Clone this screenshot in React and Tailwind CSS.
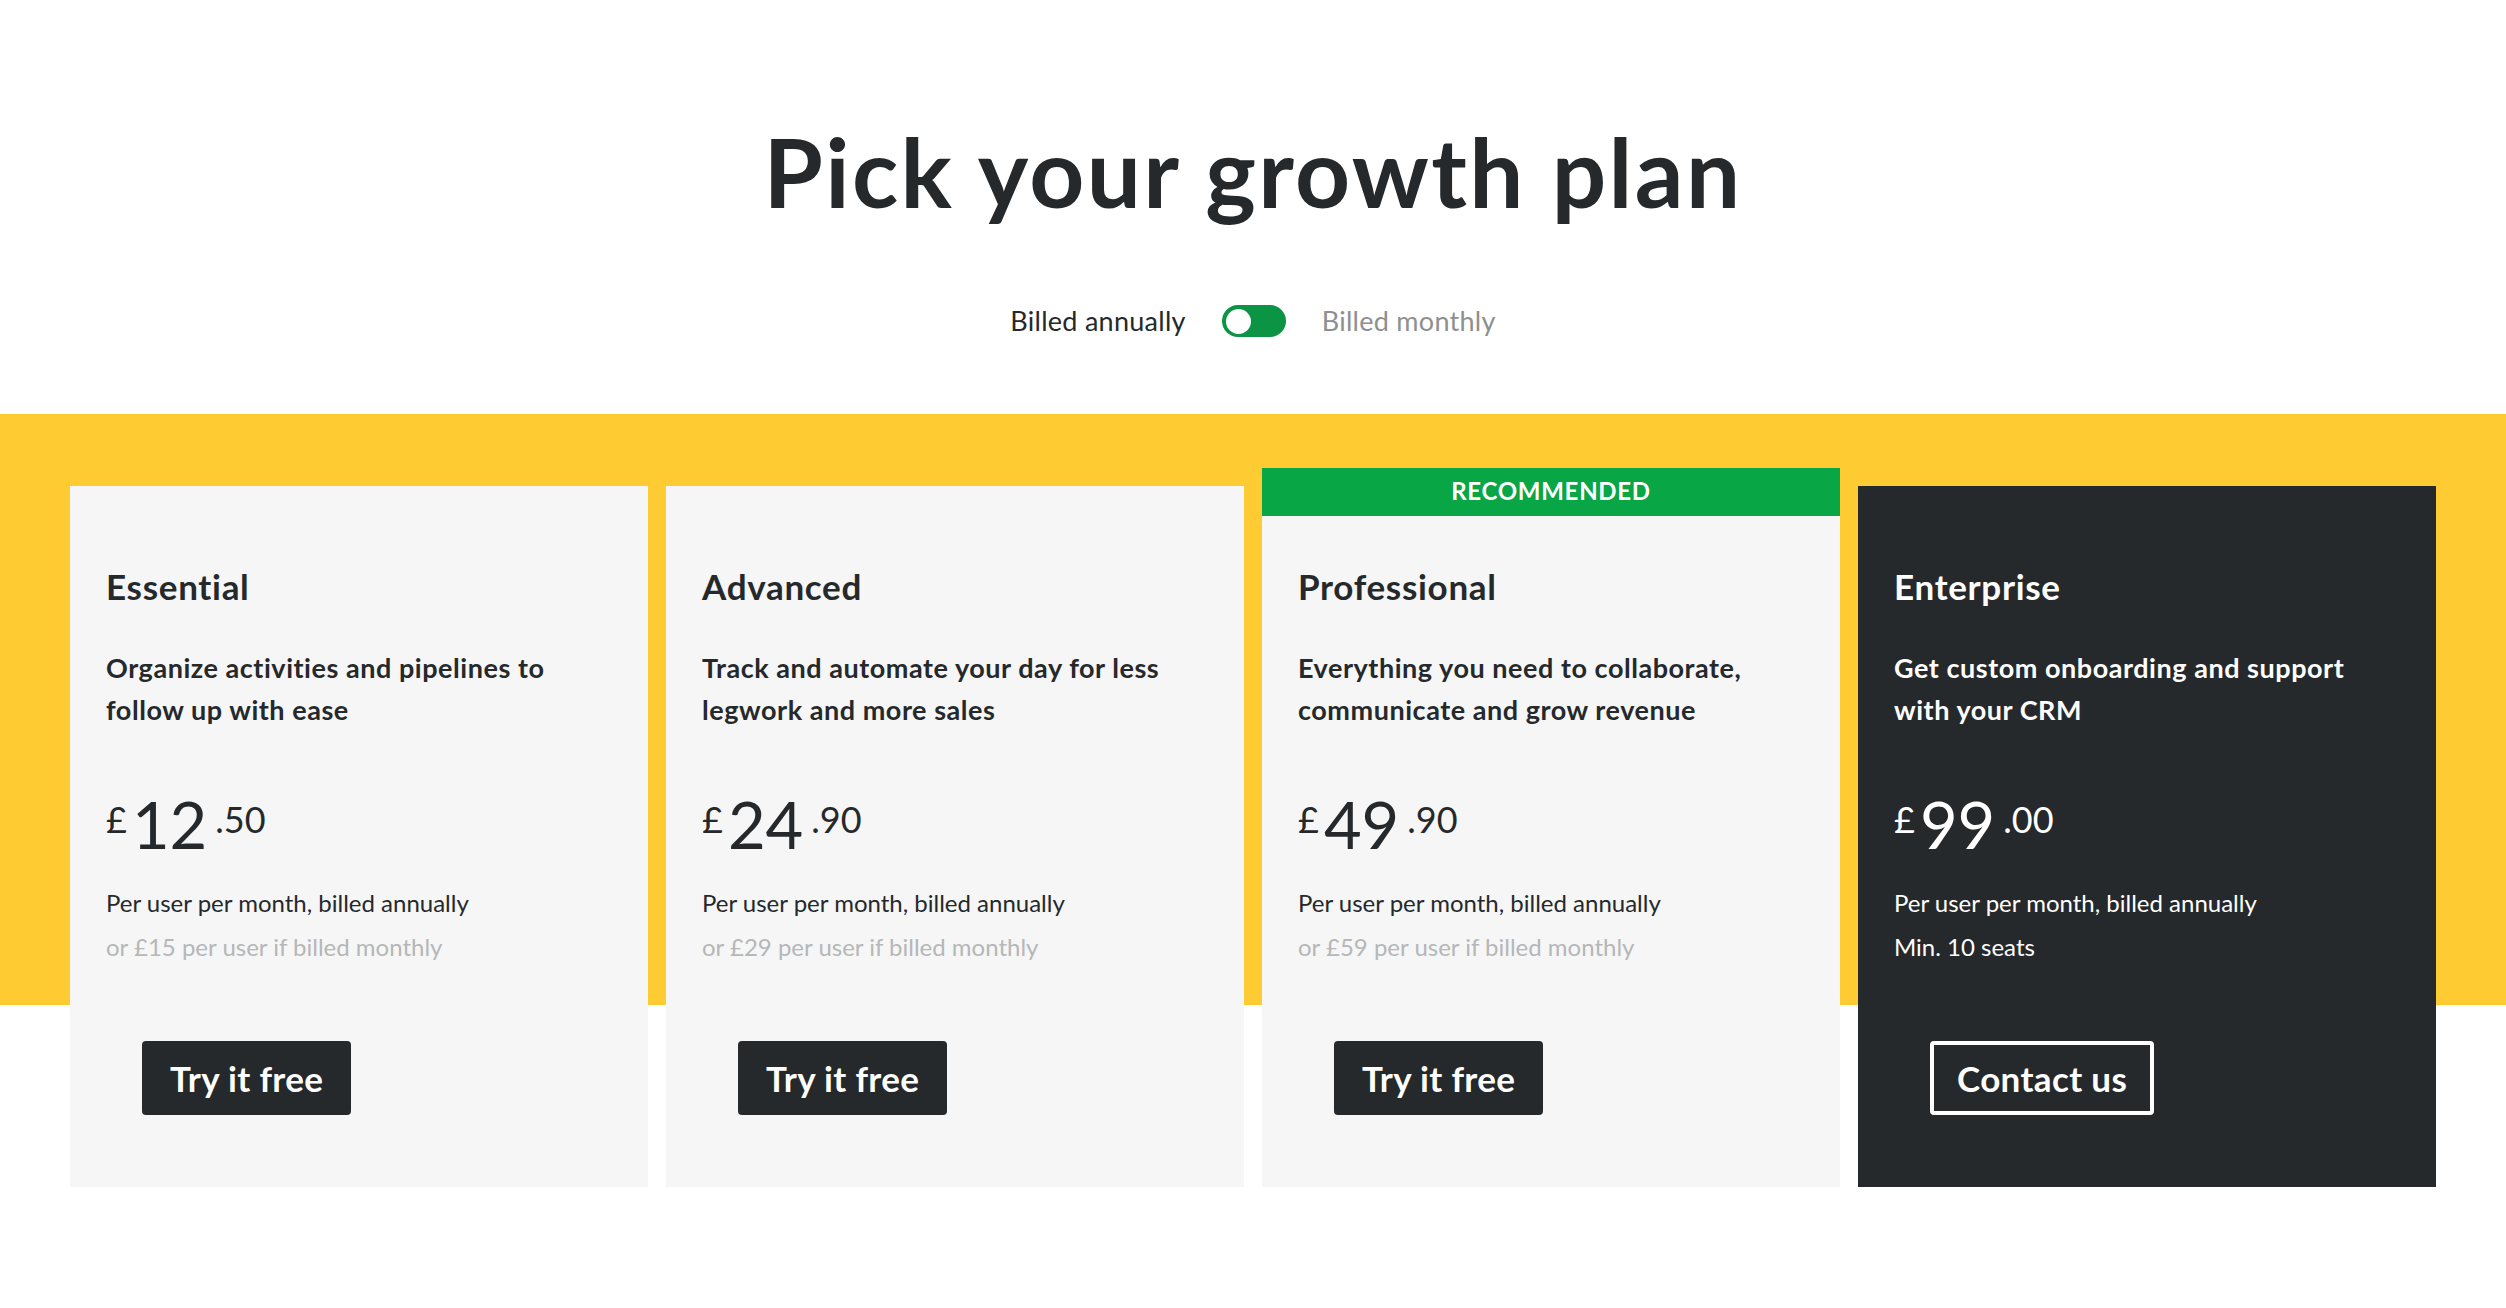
const plans = [
  {
    name: 'Essential',
    lines: ['Organize activities and pipelines to', 'follow up with ease'],
    whole: '12',
    cents: '.50',
    note: 'or £15 per user if billed monthly',
    cta: 'Try it free',
  },
  {
    name: 'Advanced',
    lines: ['Track and automate your day for less', 'legwork and more sales'],
    whole: '24',
    cents: '.90',
    note: 'or £29 per user if billed monthly',
    cta: 'Try it free',
  },
  {
    name: 'Professional',
    lines: ['Everything you need to collaborate,', 'communicate and grow revenue'],
    whole: '49',
    cents: '.90',
    note: 'or £59 per user if billed monthly',
    cta: 'Try it free',
    recommended: true,
  },
  {
    name: 'Enterprise',
    lines: ['Get custom onboarding and support', 'with your CRM'],
    whole: '99',
    cents: '.00',
    note: 'Min. 10 seats',
    cta: 'Contact us',
    dark: true,
  },
];

const PlanCard = ({ plan }) => {
  const dark = plan.dark;
  return (
    <div
      className={`relative flex flex-col pt-[79px] px-9 pb-[72px] ${
        dark ? 'bg-[#26292c] text-white' : 'bg-[#f6f6f6] text-[#25292c]'
      }`}
    >
      {plan.recommended && (
        <div className="absolute -top-[18px] left-0 right-0 h-12 bg-[#08a645] flex items-center justify-center pb-[3px] text-white text-[24px] font-bold tracking-[0.03em]">
          RECOMMENDED
        </div>
      )}

      <h2 className="text-[35px] leading-[42px] font-bold tracking-[0.02em]">{plan.name}</h2>

      <p className="mt-[40px] text-[27px] leading-[42px] font-bold tracking-[0.02em] whitespace-nowrap">
        {plan.lines[0]}
        <br />
        {plan.lines[1]}
      </p>

      {/* Price */}
      <div className="mt-[61px] flex items-start">
        <span className="mt-[9px] text-[36px] leading-none font-normal">£</span>
        <span className="ml-[5px] text-[65px] leading-none font-normal">{plan.whole}</span>
        <span className="ml-[8px] mt-[9px] text-[36px] leading-none font-normal">{plan.cents}</span>
      </div>

      <div className="mt-[24px] text-[24px] leading-[44px] font-normal">
        <p>Per user per month, billed annually</p>
        <p className={dark ? 'text-white' : 'text-[#b5b7b8]'}>{plan.note}</p>
      </div>

      <div className="mt-[72px] ml-9">
        {dark ? (
          <button className="h-[74px] px-[23px] border-4 border-white rounded-[4px] text-[35px] font-bold tracking-[0.01em] text-white">
            {plan.cta}
          </button>
        ) : (
          <button className="h-[74px] px-[28px] bg-[#25292c] rounded-[4px] text-[35px] font-bold tracking-[0.01em] text-white">
            {plan.cta}
          </button>
        )}
      </div>
    </div>
  );
};

const App = () => {
  return (
    <div className="min-h-screen bg-white font-['Lato','Noto_Sans',sans-serif] text-[#25292c]">
      {/* Heading */}
      <header className="pt-[123px] pb-[77px] flex flex-col items-center">
        <h1 className="text-[96px] leading-none font-bold tracking-[0.025em]">Pick your growth plan</h1>
        <div className="mt-[86px] h-8 flex items-center gap-9 text-[27px] tracking-[0.01em]">
          <span className="text-[#25292c]">Billed annually</span>
          <div className="w-16 h-8 rounded-full bg-[#0b9444] flex items-center pl-[4px]">
            <div className="w-[25px] h-[25px] rounded-full bg-white" />
          </div>
          <span className="text-[#8e8f90]">Billed monthly</span>
        </div>
      </header>

      {/* Plans */}
      <section className="px-[70px] pt-[72px] pb-[120px] bg-[linear-gradient(to_bottom,#fecb33_591px,#ffffff_591px)]">
        <div className="grid grid-cols-4 gap-[18px]">
          {plans.map((plan) => (
            <PlanCard key={plan.name} plan={plan} />
          ))}
        </div>
      </section>
    </div>
  );
};

export default App;
